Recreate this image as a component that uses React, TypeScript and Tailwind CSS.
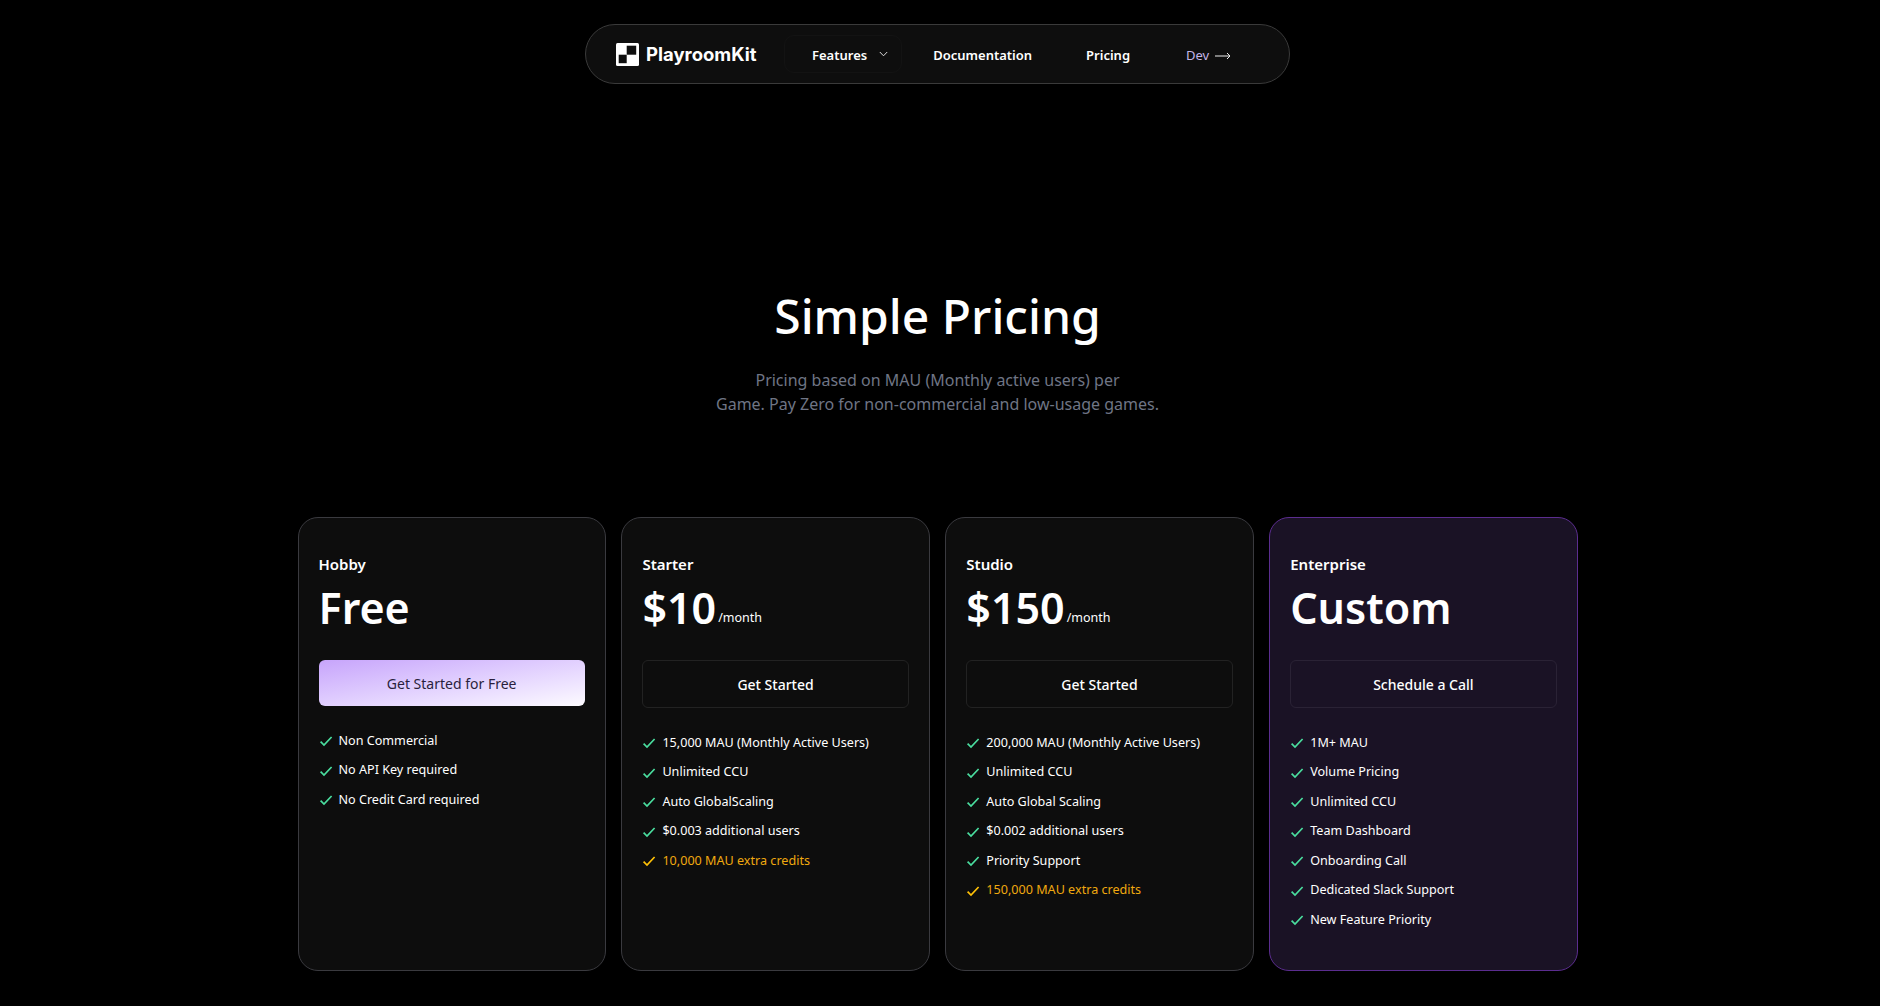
const plans = [
  {
    name: "Hobby",
    price: "Free",
    cta: "Get Started for Free",
    primary: true,
    features: ["Non Commercial", "No API Key required", "No Credit Card required"],
  },
  {
    name: "Starter",
    price: "$10",
    period: "/month",
    cta: "Get Started",
    features: ["15,000 MAU (Monthly Active Users)", "Unlimited CCU", "Auto GlobalScaling", "$0.003 additional users"],
    extra: "10,000 MAU extra credits",
  },
  {
    name: "Studio",
    price: "$150",
    period: "/month",
    cta: "Get Started",
    features: ["200,000 MAU (Monthly Active Users)", "Unlimited CCU", "Auto Global Scaling", "$0.002 additional users", "Priority Support"],
    extra: "150,000 MAU extra credits",
  },
  {
    name: "Enterprise",
    price: "Custom",
    cta: "Schedule a Call",
    enterprise: true,
    features: ["1M+ MAU", "Volume Pricing", "Unlimited CCU", "Team Dashboard", "Onboarding Call", "Dedicated Slack Support", "New Feature Priority"],
  },
];

function Check({ color }: { color: string }) {
  return (
    <svg width="14" height="14" viewBox="0 0 14 14" fill="none" className="shrink-0">
      <path d="M1.6 7.6 L5 11 L12.6 3" stroke={color} strokeWidth="1.7" />
    </svg>
  );
}

function Logo() {
  return (
    <svg width="23" height="23" viewBox="0 0 23 23" className="shrink-0">
      <rect width="23" height="23" rx="1.5" fill="#fff" />
      <rect x="10.7" y="2.7" width="9.5" height="9" fill="#0e0e0e" />
      <rect x="2.7" y="11.7" width="8" height="8.5" fill="#0e0e0e" />
    </svg>
  );
}

function Navbar() {
  return (
    <div className="flex justify-center pt-6">
      <nav className="flex h-[60px] w-[705px] items-center rounded-full border border-[#3a3a3a] bg-[#0e0e0e] pl-[30px] text-[13px] font-semibold text-white">
        <Logo />
        <span className="ml-[7px] w-[112px] pt-[2px] font-['Inter',sans-serif] text-[18.5px] font-bold whitespace-nowrap">PlayroomKit</span>
        <div className="ml-[26px] flex h-[38px] items-center rounded-[10px] border border-[#131313] pr-[13px] pl-[27px]">
          <span className="pt-[3px]">Features</span>
          <svg width="9" height="6" viewBox="0 0 9 6" fill="none" className="ml-[12px]">
            <path d="M0.8 1 L4.5 4.8 L8.2 1" stroke="#ddd" strokeWidth="1" />
          </svg>
        </div>
        <span className="ml-[31px] pt-[3px]">Documentation</span>
        <span className="ml-[54px] pt-[3px]">Pricing</span>
        <span className="ml-[56px] pt-[3px] font-normal text-[#c4b5e8]">Dev</span>
        <svg width="16" height="8" viewBox="0 0 16 8" fill="none" className="mt-[4px] ml-[6px]">
          <path d="M0 4 H15 M12 1 L15 4 L12 7" stroke="#eee" strokeWidth="1" />
        </svg>
      </nav>
    </div>
  );
}

function PlanCard({ plan }: { plan: (typeof plans)[number] }) {
  return (
    <div
      className={`h-[454px] rounded-[20px] border px-5 pt-[34px] ${
        plan.enterprise ? "border-[#5b2d8f] bg-[#1a1225]" : "border-[#3a3a3f] bg-[#0d0d0d]"
      }`}
    >
      <div className="text-[15px] leading-[24px] font-semibold text-white">{plan.name}</div>
      <div className="mt-[2px] flex h-[60px] items-end text-white">
        <span className="text-[43px] leading-[60px] font-semibold">{plan.price}</span>
        {plan.period && <span className="mb-[11px] ml-[2px] text-[12.5px] leading-[18px]">{plan.period}</span>}
      </div>
      {plan.primary ? (
        <button className="mt-[22px] flex h-[46px] w-full items-center justify-center rounded-[6px] bg-gradient-to-br from-[#c7a4fb] to-[#fdfbff] text-[14px] text-[#2a1f3d]">
          {plan.cta}
        </button>
      ) : (
        <button
          className={`mt-[22px] flex h-[48px] w-full items-center justify-center rounded-[6px] border text-[14px] font-medium text-white ${
            plan.enterprise ? "border-[#2a2235]" : "border-[#222]"
          }`}
        >
          {plan.cta}
        </button>
      )}
      <ul className="mt-[23px] flex flex-col gap-[5px]">
        {plan.features.map((f) => (
          <li key={f} className="flex h-[24.5px] items-center gap-[6px] text-[12.6px] text-white">
            <Check color="#4ade9f" />
            <span>{f}</span>
          </li>
        ))}
        {plan.extra && (
          <li className="flex h-[24.5px] items-center gap-[6px] text-[12.6px] text-[#f0a90f]">
            <Check color="#ffc107" />
            <span>{plan.extra}</span>
          </li>
        )}
      </ul>
    </div>
  );
}

export default function App() {
  return (
    <div className="min-h-[1006px] overflow-hidden bg-black pr-[5px] font-['Noto_Sans',sans-serif]">
      <Navbar />
      <div className="mt-[202px] text-center">
        <h1 className="text-[48px] leading-[60px] font-medium text-white">Simple Pricing</h1>
        <p className="mt-[22px] text-[16px] leading-[24px] text-[#6f7585]">
          Pricing based on MAU (Monthly active users) per
          <br />
          Game. Pay Zero for non-commercial and low-usage games.
        </p>
      </div>
      <div className="mx-auto mt-[101px] grid max-w-[1280px] grid-cols-4 gap-[15.6px]">
        {plans.map((p) => (
          <PlanCard key={p.name} plan={p} />
        ))}
      </div>
    </div>
  );
}
